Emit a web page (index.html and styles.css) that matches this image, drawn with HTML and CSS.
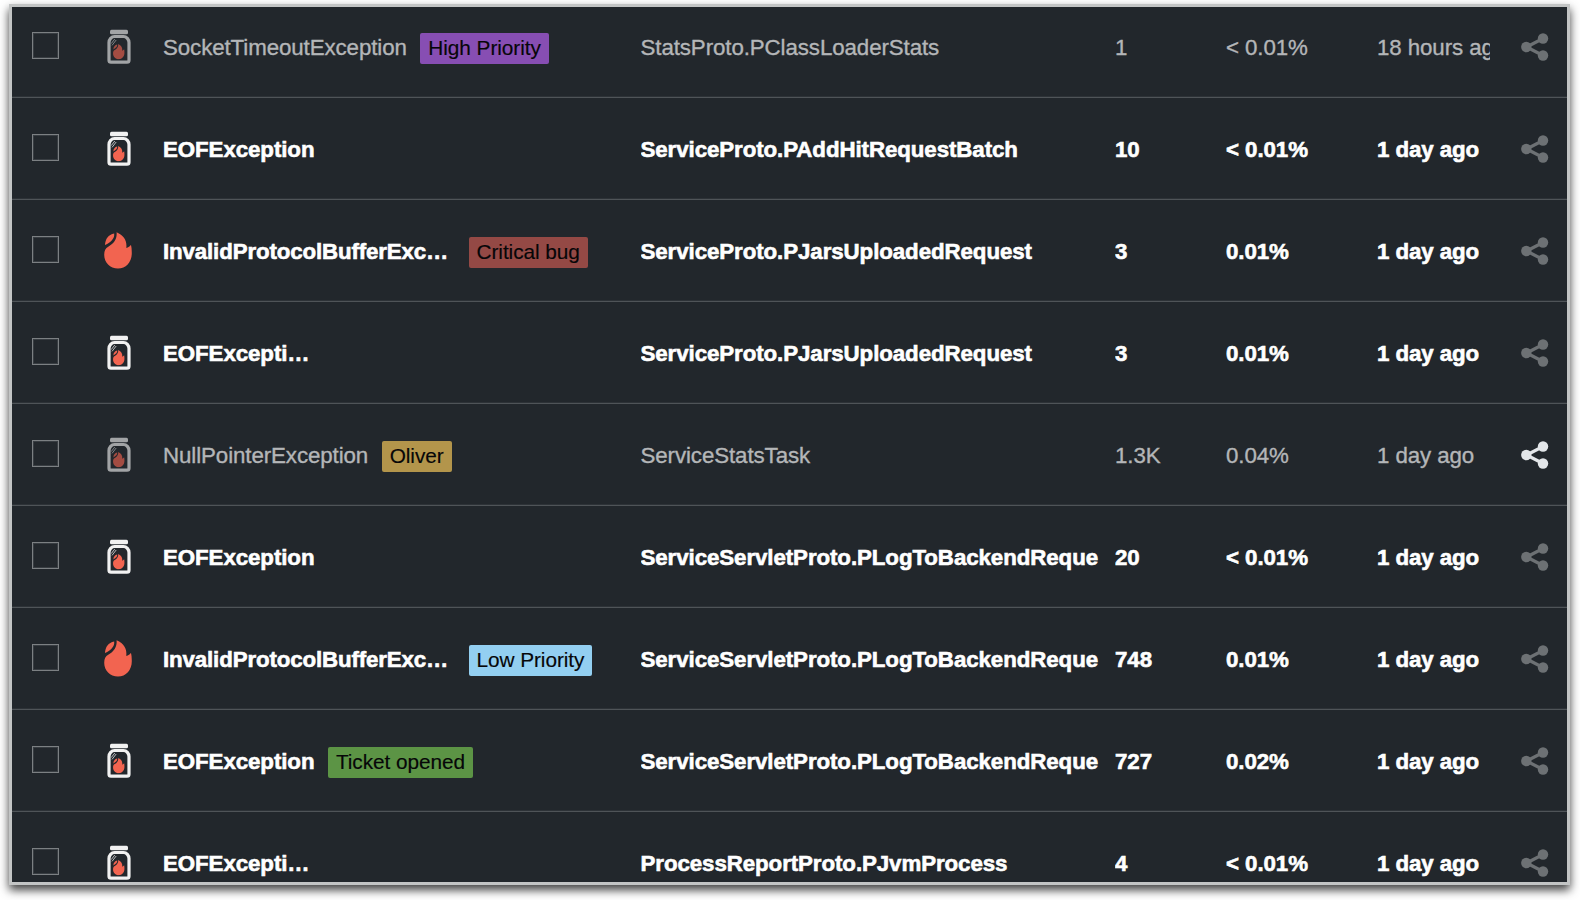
FILE: index.html
```
<!DOCTYPE html>
<html lang="en">
<head>
<meta charset="utf-8">
<title>Events</title>
<link rel="stylesheet" href="styles.css">
</head>
<body>
<svg class="defs" width="0" height="0" aria-hidden="true">
  <symbol id="flame" viewBox="0 0 28 37">
    <path d="M12.600 .2C20 3.600 23.200 8.600 22.300 16c2-.6 3.600-1.600 4.600-3.300 .6 2 .9 4.700 .9 8.600C27.800 30 22 36.600 14 36.600S.2 30.500 .2 22.800c0-4 1.300-6.600 4-8.100C9.800 11.600 13.200 7 12.600 .2z"/>
    <path d="M10.200 1.500C10.800 6.400 7 10.400 1 13 1.100 7.200 4.400 2.500 10.200 1.500z"/>
  </symbol>
  <symbol id="jar" viewBox="0 0 26 36">
    <rect class="glass" x="4" y=".8" width="18" height="4.400" rx="1.500"/>
    <path class="wall" d="M8.500 7.500h9c3 0 5.500 3 5.500 6V31.200a2 2 0 0 1-2 2H5a2 2 0 0 1-2-2V13.500c0-3 2.500-6 5.500-6z"/>
    <path class="shine" d="M5.200 14.600l3.600-4.600M6 16.400l4.200-5.400"/>
    <use class="fire" href="#flame" x="6.800" y="15" width="12" height="15.400"/>
  </symbol>
  <symbol id="share" viewBox="0 0 28 28">
    <path class="link" d="M22 5.500L5.500 14 22 22.500"/>
    <circle cx="22" cy="5.500" r="5.200"/><circle cx="5.300" cy="14" r="5.200"/><circle cx="22" cy="22.500" r="5.200"/>
  </symbol>
</svg>
<main class="panel">
  <div class="rows">
    <div class="row seen"><span class="check"></span><svg class="jar"><use href="#jar"/></svg><div class="event"><span class="name">SocketTimeoutException</span><span class="tag purple">High Priority</span></div><span class="cell">StatsProto.PClassLoaderStats</span><span class="cell">1</span><span class="cell">&lt; 0.01%</span><span class="cell">18 hours ago</span><svg class="share"><use href="#share"/></svg></div>
    <div class="row"><span class="check"></span><svg class="jar"><use href="#jar"/></svg><div class="event"><span class="name">EOFException</span></div><span class="cell">ServiceProto.PAddHitRequestBatch</span><span class="cell">10</span><span class="cell">&lt; 0.01%</span><span class="cell">1 day ago</span><svg class="share"><use href="#share"/></svg></div>
    <div class="row"><span class="check"></span><svg class="flame"><use href="#flame"/></svg><div class="event"><span class="name wide">InvalidProtocolBufferExc…</span><span class="tag red">Critical bug</span></div><span class="cell">ServiceProto.PJarsUploadedRequest</span><span class="cell">3</span><span class="cell">0.01%</span><span class="cell">1 day ago</span><svg class="share"><use href="#share"/></svg></div>
    <div class="row"><span class="check"></span><svg class="jar"><use href="#jar"/></svg><div class="event"><span class="name">EOFExcepti…</span></div><span class="cell">ServiceProto.PJarsUploadedRequest</span><span class="cell">3</span><span class="cell">0.01%</span><span class="cell">1 day ago</span><svg class="share"><use href="#share"/></svg></div>
    <div class="row seen"><span class="check"></span><svg class="jar"><use href="#jar"/></svg><div class="event"><span class="name">NullPointerException</span><span class="tag gold">Oliver</span></div><span class="cell">ServiceStatsTask</span><span class="cell">1.3K</span><span class="cell">0.04%</span><span class="cell">1 day ago</span><svg class="share active"><use href="#share"/></svg></div>
    <div class="row"><span class="check"></span><svg class="jar"><use href="#jar"/></svg><div class="event"><span class="name">EOFException</span></div><span class="cell">ServiceServletProto.PLogToBackendReque</span><span class="cell">20</span><span class="cell">&lt; 0.01%</span><span class="cell">1 day ago</span><svg class="share"><use href="#share"/></svg></div>
    <div class="row"><span class="check"></span><svg class="flame"><use href="#flame"/></svg><div class="event"><span class="name wide">InvalidProtocolBufferExc…</span><span class="tag blue">Low Priority</span></div><span class="cell">ServiceServletProto.PLogToBackendReque</span><span class="cell">748</span><span class="cell">0.01%</span><span class="cell">1 day ago</span><svg class="share"><use href="#share"/></svg></div>
    <div class="row"><span class="check"></span><svg class="jar"><use href="#jar"/></svg><div class="event"><span class="name">EOFException</span><span class="tag green">Ticket opened</span></div><span class="cell">ServiceServletProto.PLogToBackendReque</span><span class="cell">727</span><span class="cell">0.02%</span><span class="cell">1 day ago</span><svg class="share"><use href="#share"/></svg></div>
    <div class="row"><span class="check"></span><svg class="jar"><use href="#jar"/></svg><div class="event"><span class="name">EOFExcepti…</span></div><span class="cell">ProcessReportProto.PJvmProcess</span><span class="cell">4</span><span class="cell">&lt; 0.01%</span><span class="cell">1 day ago</span><svg class="share"><use href="#share"/></svg></div>
  </div>
</main>
</body>
</html>
```
FILE: styles.css
```
* { box-sizing: border-box; }
body {
  margin: 0;
  padding: 4px 10px 15px 9px;
  height: 900px;
  overflow: hidden;
  background: #fff;
  font: 22.3px/30px "Liberation Sans", Arial, sans-serif;
}
.defs { display: block; height: 0; }
.panel {
  height: 881px;
  border: 3px solid #c3c5c5;
  background: #22272c;
  overflow: hidden;
  box-shadow: 0 5px 9px rgba(0, 0, 0, .75);
}
.rows { margin-top: -11px; }
.row {
  display: grid;
  grid-template-columns: 73px 58px 477.5px 474.5px 111px 151px 144px 28px;
  align-items: start;
  height: 102px;
  padding: 36px 0 0 20px;
  border-bottom: 1px solid #4f5458;
  box-shadow: inset 0 -1px 0 #2d3237;
  color: #fff;
  font-weight: bold;
  letter-spacing: -.08px;
  -webkit-text-stroke: .6px currentColor;
}
.seen { color: #b4b6b8; font-weight: normal; letter-spacing: -.09px; -webkit-text-stroke-width: .35px; }
.check { width: 27px; height: 27px; border: 1px solid #7c8083; box-shadow: inset 0 0 0 1px rgba(124, 128, 131, .25); }
.jar { width: 26px; height: 36px; margin: -3px 0 0 .5px; }
.flame { width: 28px; height: 37px; margin: -4px 0 0 -1px; fill: #f26450; }
.glass { fill: #f1f1f1; }
.wall { fill: none; stroke: #f1f1f1; stroke-width: 3.2; }
.shine { stroke: #b8babc; stroke-width: 1; }
.fire { fill: #f26450; }
.seen .jar { opacity: .62; }
.event { display: flex; align-items: flex-start; gap: 14px; }
.name, .cell { padding-top: 1px; white-space: nowrap; }
.name { margin-right: -.5px; }
.wide { width: 292px; letter-spacing: -.14px; }
.cell { overflow: hidden; }
.cell:nth-child(7) { width: 113px; }
.tag {
  height: 31px;
  padding: 0 8px;
  margin-top: 1px;
  border-radius: 2px;
  color: #060608;
  font-size: 20.8px;
  font-weight: normal;
  letter-spacing: -.06px;
  -webkit-text-stroke-width: .15px;
  white-space: nowrap;
}
.purple { background: #874eb3; }
.red { background: #944945; }
.gold { background: #b3954b; }
.blue { background: #93cff1; }
.green { background: #5c9445; }
.share { width: 28px; height: 28px; fill: #6d7174; stroke: #6d7174; margin-top: 1px; }
.share.active { fill: #e3e6e9; stroke: #e3e6e9; }
.link { fill: none; stroke-width: 3.2; }
circle { stroke: none; }
```
